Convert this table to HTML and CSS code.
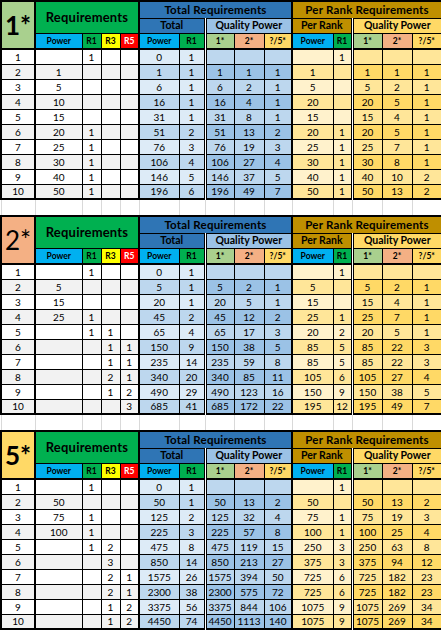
FILE: index.html
```html
<!DOCTYPE html>
<html>
<head>
<meta charset="utf-8">
<link rel="stylesheet" href="styles.css">
</head>
<body>
<table class="sheet">
<colgroup>
<col class="c-rank"><col class="c-pow"><col class="c-r"><col class="c-r"><col class="c-r">
<col class="c-tpow"><col class="c-tr1"><col class="c-q1"><col class="c-q2"><col class="c-q5">
<col class="c-ppow"><col class="c-r"><col class="c-pq1"><col class="c-pq2"><col class="c-pq5">
</colgroup>

<tbody class="block">
<tr class="h1"><td class="star s1 bold" rowspan="3">1*</td><td class="req" colspan="4" rowspan="2">Requirements</td><td class="treq" colspan="5">Total Requirements</td><td class="preq" colspan="5">Per Rank Requirements</td></tr>
<tr class="h2"><td class="tot" colspan="2">Total</td><td class="tqp" colspan="3">Quality Power</td><td class="pr" colspan="2">Per Rank</td><td class="pqp" colspan="3">Quality Power</td></tr>
<tr class="h3"><td class="pw">Power</td><td class="g1">R1</td><td class="y3">R3</td><td class="r5">R5</td><td class="pw">Power</td><td class="g1">R1</td><td class="q1">1*</td><td class="q2">2*</td><td class="q5">?/5*</td><td class="pw">Power</td><td class="g1">R1</td><td class="q1">1*</td><td class="q2">2*</td><td class="q5">?/5*</td></tr>
<tr class="d"><td>1</td><td></td><td>1</td><td></td><td></td><td>0</td><td>1</td><td></td><td></td><td></td><td></td><td>1</td><td></td><td></td><td></td></tr>
<tr class="d"><td>2</td><td>1</td><td></td><td></td><td></td><td>1</td><td>1</td><td>1</td><td>1</td><td>1</td><td>1</td><td></td><td>1</td><td>1</td><td>1</td></tr>
<tr class="d"><td>3</td><td>5</td><td></td><td></td><td></td><td>6</td><td>1</td><td>6</td><td>2</td><td>1</td><td>5</td><td></td><td>5</td><td>2</td><td>1</td></tr>
<tr class="d"><td>4</td><td>10</td><td></td><td></td><td></td><td>16</td><td>1</td><td>16</td><td>4</td><td>1</td><td>20</td><td></td><td>20</td><td>5</td><td>1</td></tr>
<tr class="d"><td>5</td><td>15</td><td></td><td></td><td></td><td>31</td><td>1</td><td>31</td><td>8</td><td>1</td><td>15</td><td></td><td>15</td><td>4</td><td>1</td></tr>
<tr class="d"><td>6</td><td>20</td><td>1</td><td></td><td></td><td>51</td><td>2</td><td>51</td><td>13</td><td>2</td><td>20</td><td>1</td><td>20</td><td>5</td><td>1</td></tr>
<tr class="d"><td>7</td><td>25</td><td>1</td><td></td><td></td><td>76</td><td>3</td><td>76</td><td>19</td><td>3</td><td>25</td><td>1</td><td>25</td><td>7</td><td>1</td></tr>
<tr class="d"><td>8</td><td>30</td><td>1</td><td></td><td></td><td>106</td><td>4</td><td>106</td><td>27</td><td>4</td><td>30</td><td>1</td><td>30</td><td>8</td><td>1</td></tr>
<tr class="d"><td>9</td><td>40</td><td>1</td><td></td><td></td><td>146</td><td>5</td><td>146</td><td>37</td><td>5</td><td>40</td><td>1</td><td>40</td><td>10</td><td>2</td></tr>
<tr class="d"><td>10</td><td>50</td><td>1</td><td></td><td></td><td>196</td><td>6</td><td>196</td><td>49</td><td>7</td><td>50</td><td>1</td><td>50</td><td>13</td><td>2</td></tr>
</tbody>

<tbody class="spacer">
<tr class="gap"><td></td><td></td><td></td><td></td><td></td><td></td><td></td><td></td><td></td><td></td><td></td><td></td><td></td><td></td><td></td></tr>
</tbody>

<tbody class="block">
<tr class="h1"><td class="star s2" rowspan="3">2*</td><td class="req" colspan="4" rowspan="2">Requirements</td><td class="treq" colspan="5">Total Requirements</td><td class="preq" colspan="5">Per Rank Requirements</td></tr>
<tr class="h2"><td class="tot" colspan="2">Total</td><td class="tqp" colspan="3">Quality Power</td><td class="pr" colspan="2">Per Rank</td><td class="pqp" colspan="3">Quality Power</td></tr>
<tr class="h3"><td class="pw">Power</td><td class="g1">R1</td><td class="y3">R3</td><td class="r5">R5</td><td class="pw">Power</td><td class="g1">R1</td><td class="q1">1*</td><td class="q2">2*</td><td class="q5">?/5*</td><td class="pw">Power</td><td class="g1">R1</td><td class="q1">1*</td><td class="q2">2*</td><td class="q5">?/5*</td></tr>
<tr class="d"><td>1</td><td></td><td>1</td><td></td><td></td><td>0</td><td>1</td><td></td><td></td><td></td><td></td><td>1</td><td></td><td></td><td></td></tr>
<tr class="d"><td>2</td><td>5</td><td></td><td></td><td></td><td>5</td><td>1</td><td>5</td><td>2</td><td>1</td><td>5</td><td></td><td>5</td><td>2</td><td>1</td></tr>
<tr class="d"><td>3</td><td>15</td><td></td><td></td><td></td><td>20</td><td>1</td><td>20</td><td>5</td><td>1</td><td>15</td><td></td><td>15</td><td>4</td><td>1</td></tr>
<tr class="d"><td>4</td><td>25</td><td>1</td><td></td><td></td><td>45</td><td>2</td><td>45</td><td>12</td><td>2</td><td>25</td><td>1</td><td>25</td><td>7</td><td>1</td></tr>
<tr class="d"><td>5</td><td></td><td>1</td><td>1</td><td></td><td>65</td><td>4</td><td>65</td><td>17</td><td>3</td><td>20</td><td>2</td><td>20</td><td>5</td><td>1</td></tr>
<tr class="d"><td>6</td><td></td><td></td><td>1</td><td>1</td><td>150</td><td>9</td><td>150</td><td>38</td><td>5</td><td>85</td><td>5</td><td>85</td><td>22</td><td>3</td></tr>
<tr class="d"><td>7</td><td></td><td></td><td>1</td><td>1</td><td>235</td><td>14</td><td>235</td><td>59</td><td>8</td><td>85</td><td>5</td><td>85</td><td>22</td><td>3</td></tr>
<tr class="d"><td>8</td><td></td><td></td><td>2</td><td>1</td><td>340</td><td>20</td><td>340</td><td>85</td><td>11</td><td>105</td><td>6</td><td>105</td><td>27</td><td>4</td></tr>
<tr class="d"><td>9</td><td></td><td></td><td>1</td><td>2</td><td>490</td><td>29</td><td>490</td><td>123</td><td>16</td><td>150</td><td>9</td><td>150</td><td>38</td><td>5</td></tr>
<tr class="d"><td>10</td><td></td><td></td><td></td><td>3</td><td>685</td><td>41</td><td>685</td><td>172</td><td>22</td><td>195</td><td>12</td><td>195</td><td>49</td><td>7</td></tr>
</tbody>

<tbody class="spacer">
<tr class="gap"><td></td><td></td><td></td><td></td><td></td><td></td><td></td><td></td><td></td><td></td><td></td><td></td><td></td><td></td><td></td></tr>
</tbody>

<tbody class="block">
<tr class="h1"><td class="star s5 bold" rowspan="3">5*</td><td class="req" colspan="4" rowspan="2">Requirements</td><td class="treq" colspan="5">Total Requirements</td><td class="preq" colspan="5">Per Rank Requirements</td></tr>
<tr class="h2"><td class="tot" colspan="2">Total</td><td class="tqp" colspan="3">Quality Power</td><td class="pr" colspan="2">Per Rank</td><td class="pqp" colspan="3">Quality Power</td></tr>
<tr class="h3"><td class="pw">Power</td><td class="g1">R1</td><td class="y3">R3</td><td class="r5">R5</td><td class="pw">Power</td><td class="g1">R1</td><td class="q1">1*</td><td class="q2">2*</td><td class="q5">?/5*</td><td class="pw">Power</td><td class="g1">R1</td><td class="q1">1*</td><td class="q2">2*</td><td class="q5">?/5*</td></tr>
<tr class="d"><td>1</td><td></td><td>1</td><td></td><td></td><td>0</td><td>1</td><td></td><td></td><td></td><td></td><td>1</td><td></td><td></td><td></td></tr>
<tr class="d"><td>2</td><td>50</td><td></td><td></td><td></td><td>50</td><td>1</td><td>50</td><td>13</td><td>2</td><td>50</td><td></td><td>50</td><td>13</td><td>2</td></tr>
<tr class="d"><td>3</td><td>75</td><td>1</td><td></td><td></td><td>125</td><td>2</td><td>125</td><td>32</td><td>4</td><td>75</td><td>1</td><td>75</td><td>19</td><td>3</td></tr>
<tr class="d"><td>4</td><td>100</td><td>1</td><td></td><td></td><td>225</td><td>3</td><td>225</td><td>57</td><td>8</td><td>100</td><td>1</td><td>100</td><td>25</td><td>4</td></tr>
<tr class="d"><td>5</td><td></td><td>1</td><td>2</td><td></td><td>475</td><td>8</td><td>475</td><td>119</td><td>15</td><td>250</td><td>3</td><td>250</td><td>63</td><td>8</td></tr>
<tr class="d"><td>6</td><td></td><td></td><td>3</td><td></td><td>850</td><td>14</td><td>850</td><td>213</td><td>27</td><td>375</td><td>3</td><td>375</td><td>94</td><td>12</td></tr>
<tr class="d"><td>7</td><td></td><td></td><td>2</td><td>1</td><td>1575</td><td>26</td><td>1575</td><td>394</td><td>50</td><td>725</td><td>6</td><td>725</td><td>182</td><td>23</td></tr>
<tr class="d"><td>8</td><td></td><td></td><td>2</td><td>1</td><td>2300</td><td>38</td><td>2300</td><td>575</td><td>72</td><td>725</td><td>6</td><td>725</td><td>182</td><td>23</td></tr>
<tr class="d"><td>9</td><td></td><td></td><td>1</td><td>2</td><td>3375</td><td>56</td><td>3375</td><td>844</td><td>106</td><td>1075</td><td>9</td><td>1075</td><td>269</td><td>34</td></tr>
<tr class="d"><td>10</td><td></td><td></td><td>1</td><td>2</td><td>4450</td><td>74</td><td>4450</td><td>1113</td><td>140</td><td>1075</td><td>9</td><td>1075</td><td>269</td><td>34</td></tr>
</tbody>
</table>
</body>
</html>
```

FILE: styles.css
```css
html, body {
  margin: 0;
  padding: 0;
  background: #ffffff;
}

body {
  font-family: Lato, "Liberation Sans", sans-serif;
  color: #000000;
}

.sheet {
  border-collapse: collapse;
  table-layout: fixed;
  width: 441px;
}

.c-rank { width: 34px; }
.c-pow { width: 47px; }
.c-r { width: 19px; }
.c-tpow { width: 40px; }
.c-tr1 { width: 26px; }
.c-q1 { width: 29px; }
.c-q2 { width: 30px; }
.c-q5 { width: 28px; }
.c-ppow { width: 41px; }
.c-pq1 { width: 30px; }
.c-pq2 { width: 30px; }
.c-pq5 { width: 30px; }

.sheet td {
  padding: 0;
  text-align: center;
  vertical-align: middle;
  line-height: 1;
  font-size: 10px;
  border: 1px solid #000000;
  white-space: nowrap;
  overflow: hidden;
}

/* row heights */
.h1 { height: 17px; }
.h2 { height: 15px; }
.h3 { height: 16px; }
.d { height: 15px; }
.gap { height: 17px; }

/* ---------- header cells ---------- */
.sheet .star {
  font-size: 26px;
  font-weight: 400;
  border: 2px solid #000000;
}
.sheet .star.bold { font-weight: 700; }
.s1 { background: #a9d08e; }
.s2 { background: #f4b084; }
.s5 { background: #ffd966; }

.sheet .req {
  background: #00b050;
  font-size: 13px;
  font-weight: 700;
  letter-spacing: 0.2px;
  border-top: 2px solid #000000;
  border-right: 2px solid #000000;
  border-left: 2px solid #000000;
}

.sheet .treq, .sheet .preq {
  font-size: 11.5px;
  font-weight: 700;
  letter-spacing: 0.2px;
  border-top: 2px solid #000000;
  border-right: 2px solid #000000;
}
.treq { background: #2f75b5; }
.preq { background: #bf8f00; }

.sheet .tot, .sheet .tqp, .sheet .pr, .sheet .pqp {
  font-size: 10.5px;
  font-weight: 700;
}
.sheet .tot { background: #2f75b5; border-right: 3px double #000000; }
.sheet .tqp { background: #9bc2e6; border-right: 2px solid #000000; }
.sheet .pr { background: #bf8f00; border-right: 3px double #000000; }
.sheet .pqp { background: #ffd966; border-right: 2px solid #000000; }

.sheet .h3 td {
  font-size: 8.5px;
  font-weight: 700;
  border-bottom: 2px solid #000000;
}
.sheet .h3 td:nth-child(4),
.sheet .h3 td:nth-child(9),
.sheet .h3 td:nth-child(14) { border-right: 2px solid #000000; }
.sheet .h3 td:nth-child(6),
.sheet .h3 td:nth-child(11) { border-right: 3px double #000000; }

.pw { background: #00b0f0; }
.g1 { background: #00b050; }
.y3 { background: #ffff00; }
.sheet .r5 { background: #ff0000; color: #ffffff; }
.q1 { background: #a9d08e; }
.q2 { background: #f4b084; }
.q5 { background: #ffd966; }

/* ---------- data rows ---------- */
.d td { background: #ffffff; }
.sheet .d td:nth-child(1) { border-left: 2px solid #000000; border-right: 2px solid #000000; }
.sheet .d td:nth-child(5),
.sheet .d td:nth-child(10),
.sheet .d td:nth-child(15) { border-right: 2px solid #000000; }
.sheet .d td:nth-child(7),
.sheet .d td:nth-child(12) { border-right: 3px double #000000; }

.d td:nth-child(6), .d td:nth-child(7) { background: #ddebf7; }
.d td:nth-child(8), .d td:nth-child(9), .d td:nth-child(10) { background: #bdd7ee; }
.d td:nth-child(11), .d td:nth-child(12) { background: #fff2cc; }
.d td:nth-child(13), .d td:nth-child(14), .d td:nth-child(15) { background: #ffe699; }

/* even data rows (tbody children 5, 7, 9 ...) */
.d:nth-child(odd) td { background: #f2f2f2; }
.d:nth-child(odd) td:nth-child(6), .d:nth-child(odd) td:nth-child(7) { background: #bdd7ee; }
.d:nth-child(odd) td:nth-child(8), .d:nth-child(odd) td:nth-child(9), .d:nth-child(odd) td:nth-child(10) { background: #9bc2e6; }
.d:nth-child(odd) td:nth-child(11), .d:nth-child(odd) td:nth-child(12) { background: #ffe699; }
.d:nth-child(odd) td:nth-child(13), .d:nth-child(odd) td:nth-child(14), .d:nth-child(odd) td:nth-child(15) { background: #ffd966; }

.sheet .block tr:last-child td { border-bottom: 2px solid #000000; }

/* ---------- spacer row with sheet gridlines ---------- */
.sheet .gap td {
  background: #ffffff;
  border-style: none;
  border-left: 1px solid #d9d9d9;
  border-right: 1px solid #d9d9d9;
}
```
